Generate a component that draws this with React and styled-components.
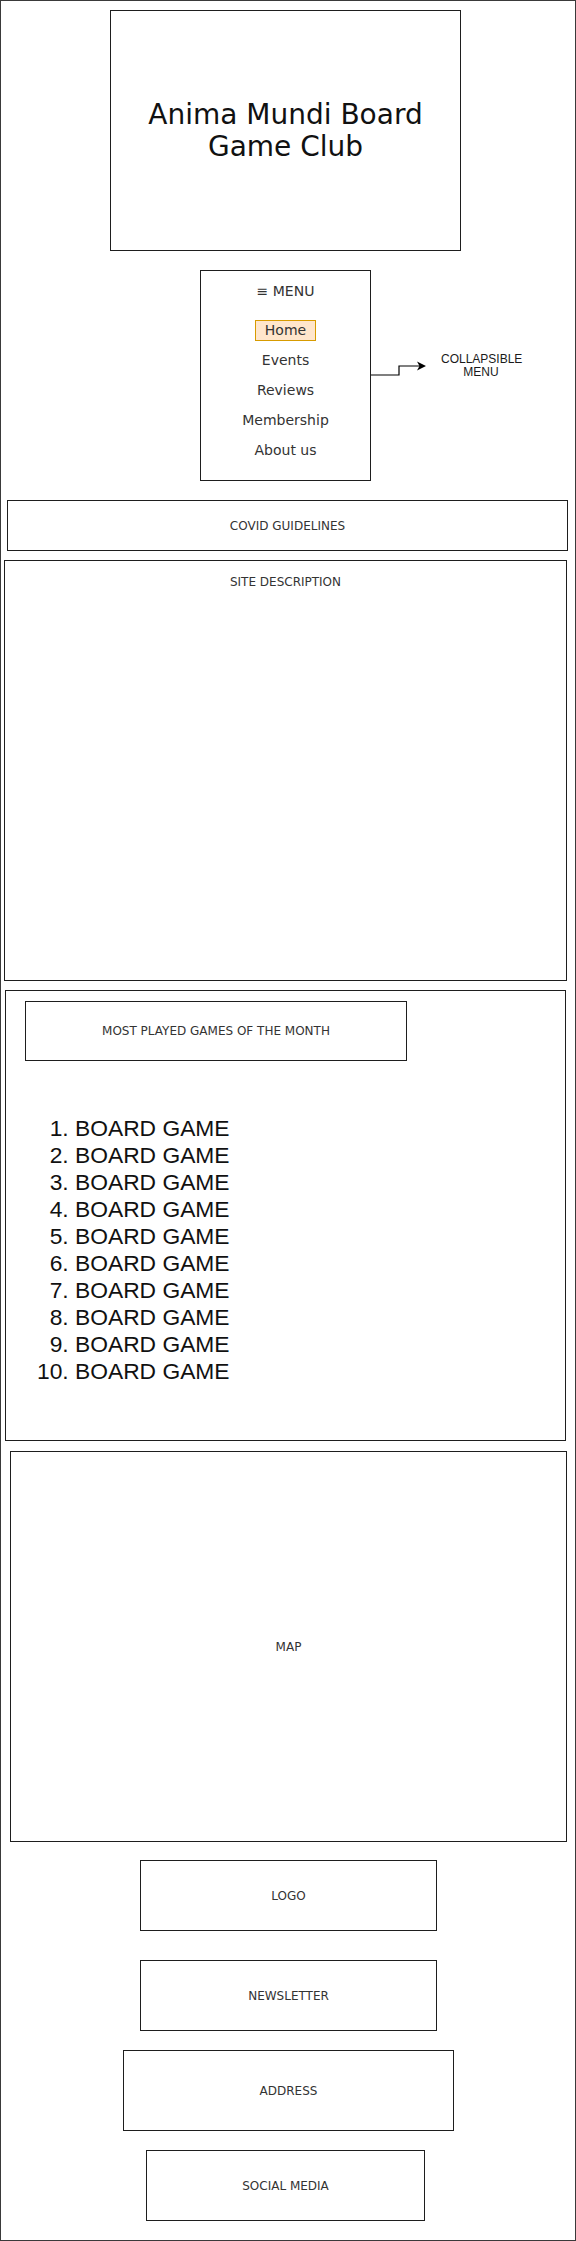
import React from 'react'
import styled, { createGlobalStyle } from 'styled-components'

const GlobalStyle = createGlobalStyle`
    html, body {
        margin: 0;
        padding: 0;
        background: #ffffff;
    }
    body {
        font-family: "DejaVu Sans", Verdana, sans-serif;
        color: #333333;
    }
`

const menuItems = ['Home', 'Events', 'Reviews', 'Membership', 'About us']

const App = () => {
    return (
        <>
            <GlobalStyle />
            <Page>
                <Panel $w={351} $h={241} $top={9} $left={109}>
                    <SiteTitle>Anima Mundi Board<br />Game Club</SiteTitle>
                </Panel>

                <MenuRow>
                    <MenuBox>
                        <MenuTitle>≡ MENU</MenuTitle>
                        <MenuList>
                            {menuItems.map((item) => (
                                <MenuItem key={item}>
                                    <MenuLink $active={item === 'Home'}>{item}</MenuLink>
                                </MenuItem>
                            ))}
                        </MenuList>
                    </MenuBox>
                    <Annotation>
                        <svg width="56" height="26" viewBox="0 0 56 26">
                            <path d="M0 22 H28 V13 H49" fill="none" stroke="#000" strokeWidth="1.2" />
                            <polygon points="55,13 46,8.5 48.5,13 46,17.5" fill="#000" />
                        </svg>
                        <AnnotationText>COLLAPSIBLE<br />MENU</AnnotationText>
                    </Annotation>
                </MenuRow>

                <Panel $w={561} $h={51} $top={19} $left={6}>
                    <Label>COVID GUIDELINES</Label>
                </Panel>

                <Panel $w={563} $h={421} $top={9} $left={3} $align="flex-start" $pad={13}>
                    <Label>SITE DESCRIPTION</Label>
                </Panel>

                <Panel $w={561} $h={451} $top={9} $left={4} $align="flex-start" $items="flex-start">
                    <TitleBox>
                        <Label>MOST PLAYED GAMES OF THE MONTH</Label>
                    </TitleBox>
                    <GamesList>
                        {Array.from({ length: 10 }).map((_, i) => (
                            <li key={i}>BOARD GAME</li>
                        ))}
                    </GamesList>
                </Panel>

                <Panel $w={557} $h={391} $top={10} $left={9}>
                    <Label>MAP</Label>
                </Panel>

                <Panel $w={297} $h={71} $top={18} $left={139}>
                    <Label>LOGO</Label>
                </Panel>
                <Panel $w={297} $h={71} $top={29} $left={139}>
                    <Label>NEWSLETTER</Label>
                </Panel>
                <Panel $w={331} $h={81} $top={19} $left={122}>
                    <Label>ADDRESS</Label>
                </Panel>
                <Panel $w={279} $h={71} $top={19} $left={145}>
                    <Label>SOCIAL MEDIA</Label>
                </Panel>
            </Page>
        </>
    )
}

export default App

export const Page = styled.div`
    box-sizing: border-box;
    width: 576px;
    height: 2241px;
    border: 1px solid #3a3a3a;
    display: flex;
    flex-direction: column;
    align-items: flex-start;
    overflow: hidden;
`

export const Panel = styled.div`
    box-sizing: border-box;
    width: ${(p) => p.$w}px;
    height: ${(p) => p.$h}px;
    margin-top: ${(p) => p.$top}px;
    margin-left: ${(p) => p.$left}px;
    padding-top: ${(p) => p.$pad || 0}px;
    border: 1px solid #1e1e1e;
    display: flex;
    flex-direction: column;
    justify-content: ${(p) => p.$align || 'center'};
    align-items: ${(p) => p.$items || 'center'};
    flex-shrink: 0;
`

export const SiteTitle = styled.h1`
    margin: 0;
    font-family: "DejaVu Sans", Verdana, sans-serif;
    font-weight: normal;
    font-size: 28px;
    line-height: 32px;
    color: #111111;
    text-align: center;
`

export const Label = styled.span`
    font-family: "DejaVu Sans", Verdana, sans-serif;
    font-size: 12px;
    line-height: 16px;
    color: #333333;
    white-space: nowrap;
`

export const MenuRow = styled.div`
    display: flex;
    align-items: flex-start;
    margin-top: 19px;
    margin-left: 199px;
    flex-shrink: 0;
`

export const MenuBox = styled.nav`
    box-sizing: border-box;
    width: 171px;
    height: 211px;
    border: 1px solid #1e1e1e;
    padding-top: 10px;
    display: flex;
    flex-direction: column;
    align-items: center;
`

export const MenuTitle = styled.div`
    font-size: 14px;
    line-height: 20px;
    color: #333333;
`

export const MenuList = styled.ul`
    list-style: none;
    margin: 14px 0 0;
    padding: 0;
    display: flex;
    flex-direction: column;
    align-items: center;
`

export const MenuItem = styled.li`
    height: 30px;
    display: flex;
    align-items: center;
    justify-content: center;
`

export const MenuLink = styled.span`
    font-size: 14px;
    line-height: 19px;
    color: #333333;
    padding: 0 ${(p) => (p.$active ? 9 : 0)}px;
    border: ${(p) => (p.$active ? '1px solid #d79b00' : '1px solid transparent')};
    background: ${(p) => (p.$active ? '#ffe6cc' : 'transparent')};
`

export const Annotation = styled.div`
    display: flex;
    align-items: center;
    margin-top: 83px;

    & svg {
        display: block;
    }
`

export const AnnotationText = styled.div`
    margin-left: 14px;
    width: 80px;
    font-family: "Liberation Sans", Arial, sans-serif;
    font-size: 12px;
    line-height: 13px;
    color: #1a1a1a;
    text-align: center;
`

export const TitleBox = styled.div`
    box-sizing: border-box;
    width: 382px;
    height: 60px;
    margin-top: 10px;
    margin-left: 19px;
    border: 1px solid #1e1e1e;
    display: flex;
    align-items: center;
    justify-content: center;
`

export const GamesList = styled.ol`
    margin: 54px 0 0;
    padding-left: 69px;
    font-family: "Liberation Sans", Arial, sans-serif;
    font-size: 22.8px;
    line-height: 27px;
    color: #111111;
`
